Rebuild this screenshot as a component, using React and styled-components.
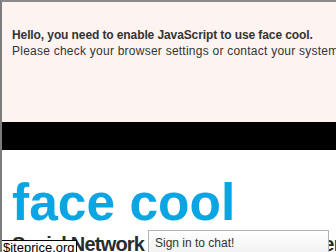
import React from 'react'
import styled, { createGlobalStyle } from 'styled-components'

const Global = createGlobalStyle`
  html, body {
    margin: 0;
    padding: 0;
    background: #fff;
    overflow: hidden;
  }
  body {
    font-family: "Liberation Sans", Arial, sans-serif;
  }
`;

const Frame = styled.div`
  position: relative;
  height: 250px;
  border-left: 2px solid #7c7c7c;
  border-top: 2px solid #8a8a8a;
  overflow: hidden;
`;

const Notice = styled.div`
  height: 120px;
  box-sizing: border-box;
  padding: 25px 0 0 10px;
  background: #fdf4f2;
  color: #333;
  font-size: 12px;
  line-height: 16px;
  white-space: nowrap;
`;

const NoticeTitle = styled.div`
  font-weight: bold;
  letter-spacing: -0.1px;
`;

const NoticeText = styled.div`
  letter-spacing: 0.24px;
`;

const TopBar = styled.div`
  height: 28px;
  background: #000;
`;

const Header = styled.header`
  padding: 27px 0 0 10px;
  white-space: nowrap;
`;

const Logo = styled.h1`
  margin: 0;
  font-size: 51.5px;
  line-height: 51px;
  font-weight: bold;
  color: #0aa6e4;
`;

const Tagline = styled.h2`
  margin: 4px 0 0;
  font-size: 20px;
  line-height: 24px;
  font-weight: bold;
  letter-spacing: -0.8px;
  color: #2b2b2b;
`;

const ChatBar = styled.div`
  position: absolute;
  left: 146px;
  top: 228px;
  width: 173px;
  height: 30px;
  border: 1px solid #b3b3b3;
  background: linear-gradient(#ffffff, #ececec);
  padding: 0 0 0 6px;
  font-size: 12px;
  line-height: 24px;
  color: #333;
`;

const Badge = styled.div`
  position: absolute;
  left: -2px;
  top: 238px;
  padding: 0 1px 0 2px;
  height: 16px;
  border: 1px solid #000;
  background: #fff;
  font-size: 13px;
  line-height: 14px;
  color: #000;
`;

export default function App() {
  return (
    <>
      <Global />
      <Frame>
        <Notice>
          <NoticeTitle>Hello, you need to enable JavaScript to use face cool.</NoticeTitle>
          <NoticeText>Please check your browser settings or contact your system administrator.</NoticeText>
        </Notice>
        <TopBar />
        <Header>
          <Logo>face cool</Logo>
          <Tagline>Social Network for Friends of Wonder</Tagline>
        </Header>
        <ChatBar>Sign in to chat!</ChatBar>
        <Badge>$iteprice.org</Badge>
      </Frame>
    </>
  )
}
